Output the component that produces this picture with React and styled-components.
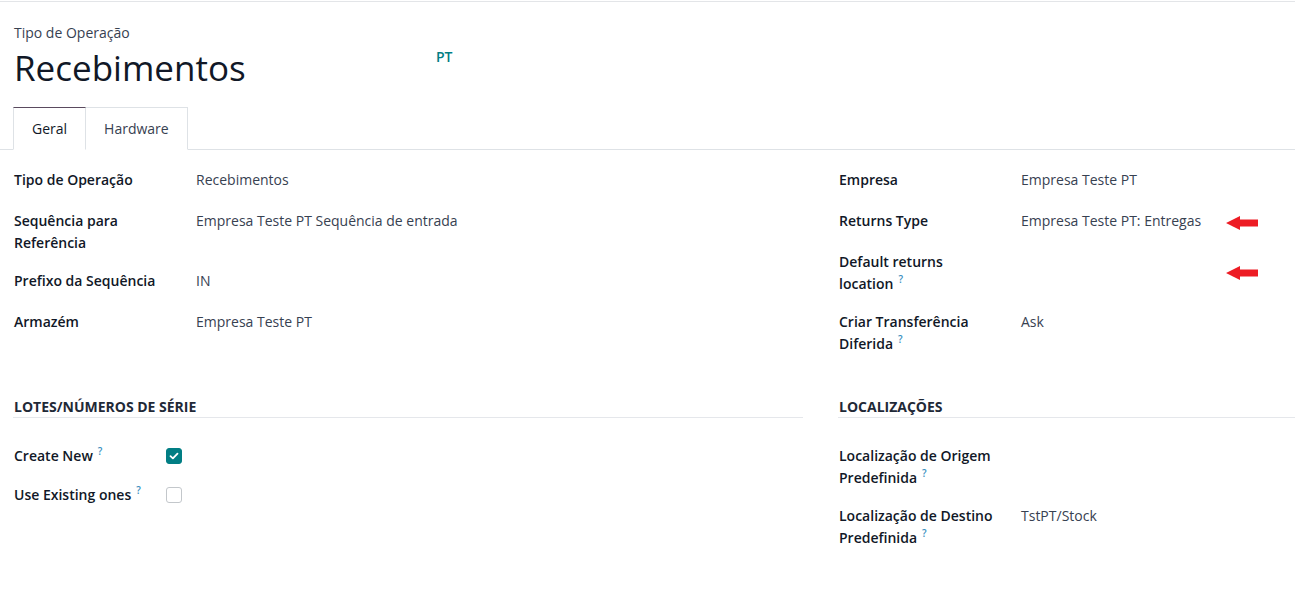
import React from 'react'
import styled, { createGlobalStyle } from 'styled-components'

const GlobalStyle = createGlobalStyle`
  body {
    margin: 0;
    background: #fff;
    font-family: "Open Sans", "Noto Sans", sans-serif;
    font-size: 14px;
    color: #374151;
  }
`

const Sheet = styled.div`
  margin-top: 1px;
  border-top: 1px solid #e3e5e8;
  min-height: 588px;
  overflow: hidden;
`

const Header = styled.div`
  display: flex;
  align-items: flex-start;
  padding: 21px 0 0 14px;
`

const TitleBlock = styled.div`
  flex: 0 0 422px;
`

const Subtitle = styled.div`
  font-size: 14px;
  line-height: 20px;
  color: #374151;
`

const Title = styled.h1`
  margin: 1px 0 0;
  font-size: 35px;
  font-weight: 400;
  line-height: 48px;
  color: #111827;
`

const Company = styled.span`
  margin-top: 24px;
  font-size: 14px;
  font-weight: 600;
  color: #017e84;
`

const TabBar = styled.div`
  display: flex;
  margin-top: 15px;
  padding-left: 13px;
  border-bottom: 1px solid #dee2e6;
`

const Tab = styled.div`
  height: 41px;
  padding: 0 18px;
  display: flex;
  align-items: center;
  font-size: 14px;
  color: ${p => (p.active ? '#111827' : '#374151')};
  background: #fff;
  border: 1px solid #dee2e6;
  border-top-color: ${p => (p.active ? '#5a4a5e' : '#dee2e6')};
  border-bottom: 1px solid ${p => (p.active ? '#fff' : 'transparent')};
  margin-bottom: -1px;
  & + & {
    border-left: none;
  }
`

const Body = styled.div`
  display: grid;
  grid-template-columns: 825px 1fr;
  padding: 19px 0 0 14px;
`

const Group = styled.div`
  display: flex;
  flex-direction: column;
`

const Section = styled.div`
  margin-top: 26px;
  padding-right: ${p => p.pr || 0}px;
  margin-left: -1px;
`

const SectionTitle = styled.div`
  padding-left: 1px;
  font-size: 14px;
  font-weight: 700;
  line-height: 20px;
  color: #1f2937;
  text-transform: uppercase;
  border-bottom: 1px solid #e5e7eb;
  margin-bottom: 27px;
`

const Row = styled.div`
  display: grid;
  grid-template-columns: ${p => p.labelWidth || 182}px 1fr;
  min-height: 25px;
  margin-bottom: ${p => p.mb ?? 16}px;
  margin-left: ${p => (p.inSection ? 1 : 0)}px;
  line-height: 22px;
`

const Label = styled.div`
  font-weight: 600;
  color: #111827;
  padding-right: 10px;
`

const Value = styled.div`
  position: relative;
  color: #374151;
`

const Help = styled.sup`
  font-size: 10px;
  line-height: 0;
  margin-left: 5px;
  color: #3a8fc0;
  font-weight: 600;
`

const Check = styled.span`
  margin-top: 3px;
  width: 16px;
  height: 16px;
  box-sizing: border-box;
  border-radius: 3px;
  display: flex;
  align-items: center;
  justify-content: center;
  background: ${p => (p.checked ? '#017e84' : '#fff')};
  border: 1px solid ${p => (p.checked ? '#017e84' : '#c3c7cb')};
`

const Arrow = styled.svg`
  position: absolute;
  left: 205px;
  top: 50%;
  transform: translateY(-50%);
`

const RedArrow = () => (
  <Arrow width="32" height="15" viewBox="0 0 32 15">
    <polygon points="0,7.5 14,0.5 14,4 32,4 32,11 14,11 14,14.5" fill="#ed1c24" />
  </Arrow>
)

const Field = ({ label, help, children, arrow, ...rest }) => (
  <Row {...rest}>
    <Label>
      {label}
      {help && <Help>?</Help>}
    </Label>
    <Value>
      {children}
      {arrow && <RedArrow />}
    </Value>
  </Row>
)

const CheckField = ({ label, checked, mb }) => (
  <Row labelWidth={152} mb={mb} inSection>
    <Label>
      {label}
      <Help>?</Help>
    </Label>
    <Value>
      <Check checked={checked}>
        {checked && (
          <svg width="10" height="8" viewBox="0 0 10 8">
            <path d="M1.5 4.2 L3.9 6.4 L8.5 1.6" stroke="#fff" strokeWidth="1.8" fill="none" strokeLinecap="round" strokeLinejoin="round" />
          </svg>
        )}
      </Check>
    </Value>
  </Row>
)

export default function App() {
  return (
    <Sheet>
      <GlobalStyle />
      <Header>
        <TitleBlock>
          <Subtitle>Tipo de Operação</Subtitle>
          <Title>Recebimentos</Title>
        </TitleBlock>
        <Company>PT</Company>
      </Header>
      <TabBar>
        <Tab active>Geral</Tab>
        <Tab>Hardware</Tab>
      </TabBar>
      <Body>
        <Group>
          <Field label="Tipo de Operação">Recebimentos</Field>
          <Field label={<>Sequência para<br />Referência</>}>Empresa Teste PT Sequência de entrada</Field>
          <Field label="Prefixo da Sequência">IN</Field>
          <Field label="Armazém">Empresa Teste PT</Field>
        </Group>
        <Group>
          <Field label="Empresa">Empresa Teste PT</Field>
          <Field label="Returns Type" arrow>Empresa Teste PT: Entregas</Field>
          <Field label={<>Default returns<br />location</>} help arrow />
          <Field label={<>Criar Transferência<br />Diferida</>} help>Ask</Field>
        </Group>
        <Section pr={36}>
          <SectionTitle>Lotes/Números de Série</SectionTitle>
          <CheckField label="Create New" checked mb={14} />
          <CheckField label="Use Existing ones" />
        </Section>
        <Section>
          <SectionTitle>Localizações</SectionTitle>
          <Field inSection label={<>Localização de Origem<br />Predefinida</>} help />
          <Field inSection label={<>Localização de Destino<br />Predefinida</>} help>TstPT/Stock</Field>
        </Section>
      </Body>
    </Sheet>
  )
}
